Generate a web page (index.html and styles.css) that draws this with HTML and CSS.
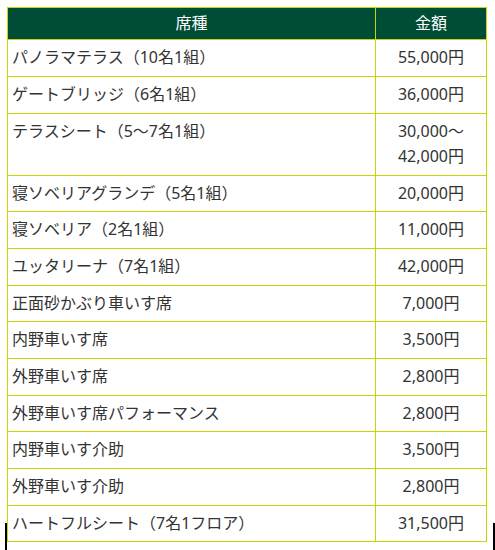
FILE: index.html
```html
<!DOCTYPE html>
<html lang="ja">
<head>
<meta charset="utf-8">
<title>席種・金額</title>
<link rel="stylesheet" href="styles.css">
</head>
<body>
<table class="price-table">
  <thead>
    <tr><th class="col-seat">席種</th><th class="col-price">金額</th></tr>
  </thead>
  <tbody>
    <tr><td>パノラマテラス（10名1組）</td><td class="price">55,000円</td></tr>
    <tr><td>ゲートブリッジ（6名1組）</td><td class="price">36,000円</td></tr>
    <tr><td>テラスシート（5～7名1組）</td><td class="price">30,000～<br>42,000円</td></tr>
    <tr><td>寝ソベリアグランデ（5名1組）</td><td class="price">20,000円</td></tr>
    <tr><td>寝ソベリア（2名1組）</td><td class="price">11,000円</td></tr>
    <tr><td>ユッタリーナ（7名1組）</td><td class="price">42,000円</td></tr>
    <tr><td>正面砂かぶり車いす席</td><td class="price">7,000円</td></tr>
    <tr><td>内野車いす席</td><td class="price">3,500円</td></tr>
    <tr><td>外野車いす席</td><td class="price">2,800円</td></tr>
    <tr><td>外野車いす席パフォーマンス</td><td class="price">2,800円</td></tr>
    <tr><td>内野車いす介助</td><td class="price">3,500円</td></tr>
    <tr><td>外野車いす介助</td><td class="price">2,800円</td></tr>
    <tr><td>ハートフルシート（7名1フロア）</td><td class="price">31,500円</td></tr>
  </tbody>
</table>
<span class="edge edge-left"></span>
<span class="edge edge-right"></span>
</body>
</html>
```
FILE: styles.css
```css
html, body {
  margin: 0;
  padding: 0;
  background: #ffffff;
}
body {
  padding: 7px;
  font-family: "Noto Sans", "Noto Sans CJK JP", sans-serif;
  font-size: 16px;
  color: #333333;
  position: relative;
  min-height: 536px;
}
.price-table {
  border-collapse: separate;
  border-spacing: 0;
  table-layout: fixed;
  width: 480px;
  border-top: 1px solid #c9d400;
  border-left: 1px solid #c9d400;
}
.price-table th,
.price-table td {
  box-sizing: border-box;
  border-right: 1px solid #c9d400;
  border-bottom: 1px solid #c9d400;
  line-height: 25px;
}
.col-seat { width: 368px; }
.col-price { width: 111px; }
.price-table th {
  background: #004d36;
  color: #ffffff;
  font-weight: normal;
  text-align: center;
  padding: 3px 4px;
}
.price-table td {
  padding: 5px 4px 6px 4px;
  vertical-align: top;
  text-align: left;
}
.price-table tbody tr:nth-child(3n+4) td {
  padding-bottom: 5px;
}
.price-table td.price {
  text-align: center;
}
.edge {
  position: absolute;
  top: 523px;
  bottom: 0;
  width: 2px;
  background: #000000;
}
.edge-left { left: 5px; }
.edge-right { left: 493px; }
```
